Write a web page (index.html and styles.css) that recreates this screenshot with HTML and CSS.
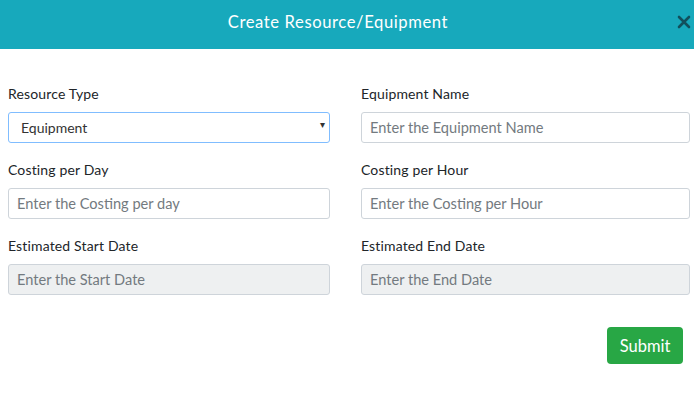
FILE: index.html
```html
<!DOCTYPE html>
<html lang="en">
<head>
    <meta charset="UTF-8">
    <title>Create Resource/Equipment</title>
    <link rel="stylesheet" href="styles.css">
</head>
<body>
    <div class="modal">
        <div class="modal-header">
            <h1 class="modal-title">Create Resource/Equipment</h1>
            <button class="close-btn" aria-label="Close">
                <svg width="14" height="14" viewBox="0 0 14 14"><path d="M2 2 L12 12 M12 2 L2 12" stroke="#11505c" stroke-width="2.6" stroke-linecap="round"/></svg>
            </button>
        </div>
        <form class="modal-body">
            <div class="form-grid">
                <div class="field">
                    <label class="field-label">Resource Type</label>
                    <div class="select-wrap">
                        <select class="form-control select-control">
                            <option>Equipment</option>
                        </select>
                        <span class="caret">&#9662;</span>
                    </div>
                </div>
                <div class="field">
                    <label class="field-label">Equipment Name</label>
                    <input type="text" class="form-control" placeholder="Enter the Equipment Name">
                </div>
                <div class="field">
                    <label class="field-label">Costing per Day</label>
                    <input type="text" class="form-control" placeholder="Enter the Costing per day">
                </div>
                <div class="field">
                    <label class="field-label">Costing per Hour</label>
                    <input type="text" class="form-control" placeholder="Enter the Costing per Hour">
                </div>
                <div class="field">
                    <label class="field-label">Estimated Start Date</label>
                    <input type="text" class="form-control" placeholder="Enter the Start Date" readonly>
                </div>
                <div class="field">
                    <label class="field-label">Estimated End Date</label>
                    <input type="text" class="form-control" placeholder="Enter the End Date" readonly>
                </div>
            </div>
            <div class="actions">
                <button type="button" class="submit-btn">Submit</button>
            </div>
        </form>
    </div>
</body>
</html>
```

FILE: styles.css
```css
* {
    margin: 0;
    padding: 0;
    box-sizing: border-box;
}
body {
    background-color: #ffffff;
    font-family: Lato, "Open Sans", sans-serif;
    color: #212529;
}
.modal {
    width: 694px;
}
.modal-header {
    position: relative;
    height: 49px;
    background-color: #17a9bc;
    display: flex;
    align-items: center;
    justify-content: center;
}
.modal-title {
    font-family: Lato, sans-serif;
    font-size: 16.6px;
    font-weight: 400;
    color: #ffffff;
    letter-spacing: 0.6px;
    margin: -5px 0 0 -18px;
}
.close-btn {
    position: absolute;
    right: 3px;
    top: 15px;
    width: 14px;
    height: 14px;
    border: none;
    background: none;
    display: flex;
}
.modal-body {
    padding: 35px 4px 0 8px;
}
.form-grid {
    display: grid;
    grid-template-columns: 322px 329px;
    column-gap: 31px;
    row-gap: 17px;
}
.field {
    display: flex;
    flex-direction: column;
}
.field-label {
    font-size: 14px;
    color: #212529;
    height: 20px;
    line-height: 20px;
    margin-bottom: 8px;
    letter-spacing: 0.15px;
}
.form-control {
    width: 100%;
    height: 31px;
    padding: 0 8px;
    font-family: Lato, "Open Sans", sans-serif;
    font-size: 14.6px;
    color: #495057;
    background-color: #ffffff;
    border: 1px solid #ced4da;
    border-radius: 3px;
    outline: none;
}
.form-control::placeholder {
    color: #737a80;
}
.form-control[readonly] {
    background-color: #eef0f1;
}
.select-wrap {
    position: relative;
}
.select-control {
    appearance: none;
    padding: 0 12px;
    border-color: #80bdff;
    color: #333333;
    font-size: 14px;
}
.caret {
    position: absolute;
    right: 5px;
    top: 6px;
    font-size: 10px;
    color: #333333;
}
.actions {
    display: flex;
    justify-content: flex-end;
    padding: 32px 7px 0 0;
}
.submit-btn {
    width: 76px;
    height: 37px;
    background-color: #28a745;
    color: #ffffff;
    border: none;
    border-radius: 4px;
    font-family: Lato, sans-serif;
    font-size: 16.5px;
}
```
